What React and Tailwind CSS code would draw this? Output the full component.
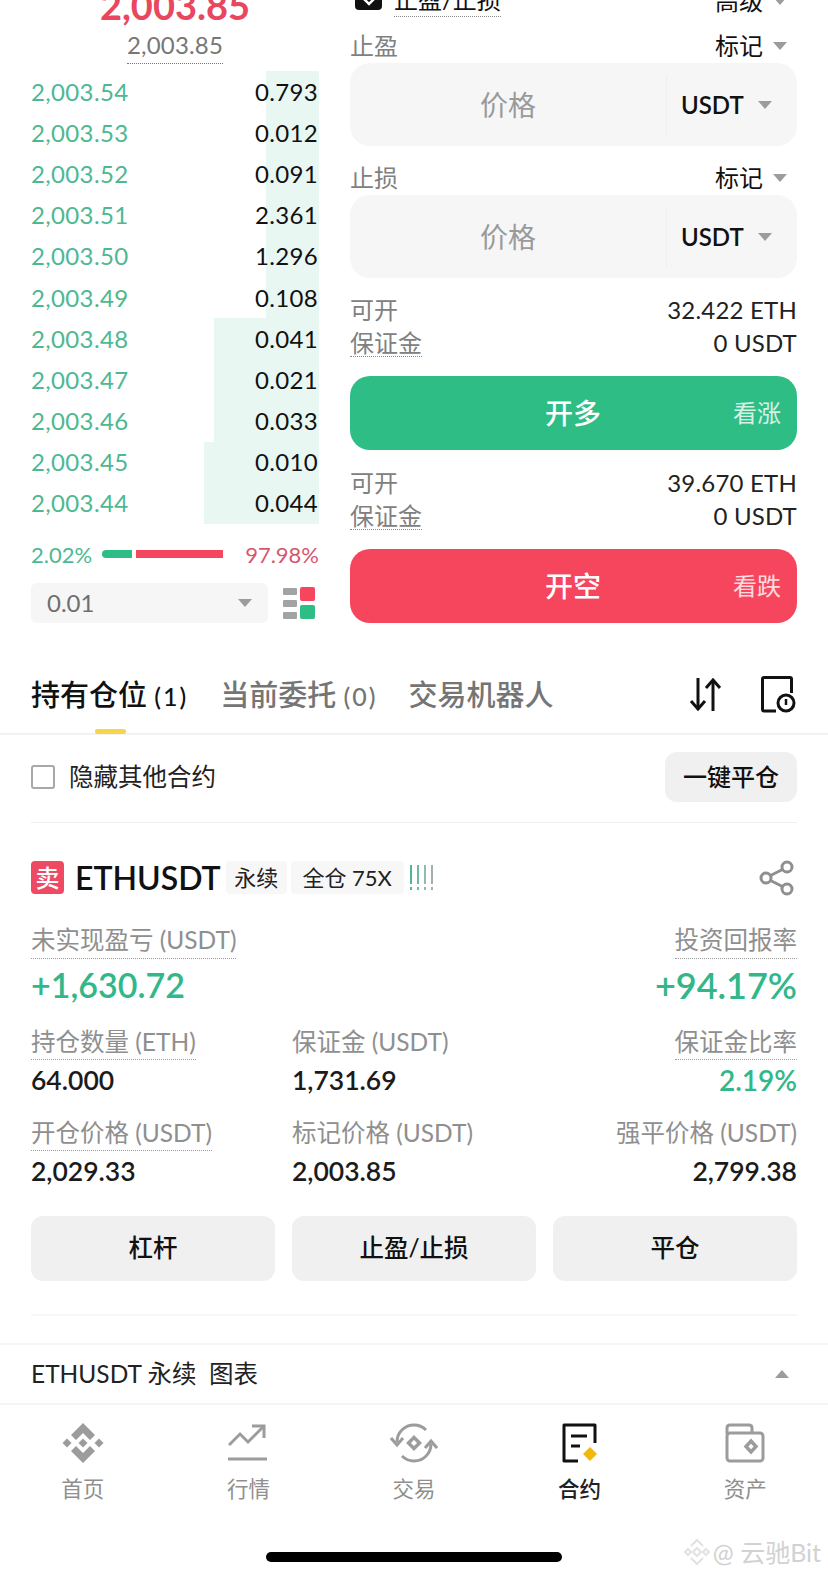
const rows = [
  ['2,003.54', '0.793', 'w-[53px]'],
  ['2,003.53', '0.012', 'w-[53px]'],
  ['2,003.52', '0.091', 'w-[53px]'],
  ['2,003.51', '2.361', 'w-[53px]'],
  ['2,003.50', '1.296', 'w-[53px]'],
  ['2,003.49', '0.108', 'w-[53px]'],
  ['2,003.48', '0.041', 'w-[105px]'],
  ['2,003.47', '0.021', 'w-[105px]'],
  ['2,003.46', '0.033', 'w-[105px]'],
  ['2,003.45', '0.010', 'w-[115px]'],
  ['2,003.44', '0.044', 'w-[115px]'],
];

function Caret({ className = '' }) {
  return <span className={`inline-block h-0 w-0 border-x-[7px] border-t-[8px] border-x-transparent border-t-[#9c9c9c] ${className}`} />;
}

function PriceInput() {
  return (
    <div className="flex h-[83px] items-center rounded-[20px] bg-[#f6f6f6]">
      <div className="w-[316px] text-center text-[28px] text-[#9a9a9a]">价格</div>
      <div className="flex h-[60px] flex-1 items-center border-l border-[#efefef] pl-[14px]">
        <span className="text-[24px] font-semibold text-[#111]">USDT</span>
        <Caret className="ml-[14px]" />
      </div>
    </div>
  );
}

function OpenInfo({ amount }) {
  return (
    <div className="text-[24px] leading-[33px]">
      <div className="flex justify-between">
        <span className="text-[#808080]">可开</span>
        <span className="tracking-[0.2px] text-[#222]">{amount}</span>
      </div>
      <div className="flex justify-between">
        <span className="h-[31px] border-b border-dotted border-[#8a8a8a] text-[#808080]">保证金</span>
        <span className="tracking-[0.2px] text-[#222]">0 USDT</span>
      </div>
    </div>
  );
}

function TradeButton({ label, hint, color }) {
  return (
    <div className={`relative flex h-[74px] items-center justify-center rounded-[20px] text-white ${color}`}>
      <span className="pr-[1px] text-[28px] font-medium">{label}</span>
      <span className="absolute right-[16px] text-[24px] text-white/80">{hint}</span>
    </div>
  );
}

function Stat({ label, value, right = false, dotted = true, valueClass = '' }) {
  return (
    <div className={`flex flex-col ${right ? 'items-end' : 'items-start'}`}>
      <span className={`h-[34px] text-[24.5px] leading-[32px] text-[#8f8f8f] ${dotted ? 'border-b border-dotted border-[#9a9a9a]' : ''}`}>{label}</span>
      <span className={`mt-[3px] leading-[34px] font-semibold ${valueClass || 'text-[26.5px] text-[#1b1b1b]'}`}>{value}</span>
    </div>
  );
}

function BinanceIcon() {
  return (
    <svg width="42" height="42" viewBox="0 0 42 42" fill="#9c9c9c">
      <path d="M21 1 L33 13 L28 18 L21 11 L14 18 L9 13 Z" />
      <path d="M21 41 L33 29 L28 24 L21 31 L14 24 L9 29 Z" />
      <path d="M21 16.5 L25.5 21 L21 25.5 L16.5 21 Z" />
      <path d="M5 16.5 L9.5 21 L5 25.5 L0.5 21 Z" />
      <path d="M37 16.5 L41.5 21 L37 25.5 L32.5 21 Z" />
    </svg>
  );
}

function TrendIcon() {
  return (
    <svg width="40" height="38" viewBox="0 0 40 38" fill="none" stroke="#9c9c9c" strokeWidth="3">
      <path d="M1 21 L12 10 L20 18 L35 3" />
      <path d="M24 2 H36 V14" />
      <path d="M0 35 H39" />
    </svg>
  );
}

function SwapIcon() {
  return (
    <svg width="48" height="40" viewBox="0 0 48 40" fill="none" stroke="#9c9c9c" strokeWidth="3">
      <path d="M7 19 C7 9 15 2 24 2 C29 2 33 4 36 7" />
      <path d="M41 21 C41 31 33 38 24 38 C19 38 15 36 12 33" />
      <path d="M1 15 L7 22 L13 15" />
      <path d="M35 25 L41 18 L47 25" />
      <path d="M24 14.5 L29.5 20 L24 25.5 L18.5 20 Z" strokeWidth="3.5" />
    </svg>
  );
}

function ContractIcon() {
  return (
    <svg width="36" height="40" viewBox="0 0 36 40" fill="none">
      <path d="M16 38 H2 V2 H33 V20" stroke="#111" strokeWidth="3" strokeLinejoin="round" />
      <path d="M9 13 H25" stroke="#111" strokeWidth="3" />
      <path d="M9 23 H18" stroke="#111" strokeWidth="3" />
      <path d="M28 24 L35 31 L28 38 L21 31 Z" fill="#f0b90b" />
    </svg>
  );
}

function WalletIcon() {
  return (
    <svg width="40" height="40" viewBox="0 0 40 40" fill="none" stroke="#9c9c9c" strokeWidth="3">
      <path d="M2 11 V5 Q2 2 5 2 H24 Q27 2 27 5 V10" />
      <rect x="2" y="10" width="36" height="28" rx="3" />
      <path d="M26 18 L31 23.5 L26 29 L21 23.5 Z" strokeWidth="3.5" />
    </svg>
  );
}

const tabs = [
  ['首页', <BinanceIcon key="a" />, false],
  ['行情', <TrendIcon key="b" />, false],
  ['交易', <SwapIcon key="c" />, false],
  ['合约', <ContractIcon key="d" />, true],
  ['资产', <WalletIcon key="e" />, false],
];

export default function App() {
  return (
    <div className="relative h-[1575px] w-[828px] overflow-hidden bg-white [font-family:Lato,'Noto_Sans_CJK_SC',sans-serif]">
      <div className="flex h-[640px] px-[31px]">
        {/* order book */}
        <div className="w-[288px]">
          <div className="-mt-[17px] flex h-[88px] flex-col items-center">
            <div className="h-[44px] text-[38px] leading-[44px] font-bold text-[#e8475f]">2,003.85</div>
            <div className="h-[37px] border-b border-dotted border-[#777] text-[24px] leading-[36px] tracking-[0.2px] text-[#777]">2,003.85</div>
          </div>
          <div className="h-[453px]">
            {rows.map(([price, qty, bar]) => (
              <div key={price} className="relative flex h-[41.2px] items-center justify-between text-[24px] tracking-[0.35px]">
                <div className={`absolute top-0 right-0 bottom-0 bg-[#e9f7f3] ${bar}`} />
                <span className="relative text-[#4db892]">{price}</span>
                <span className="relative pr-[1px] text-[#111]">{qty}</span>
              </div>
            ))}
          </div>
          <div className="mt-[14px] flex h-[32px] items-center text-[22px]">
            <span className="w-[71px] text-[#4db892]">2.02%</span>
            <span className="h-[8px] w-[30px] rounded-l-full bg-[#2ebd85]" />
            <span className="ml-[4px] h-[8px] w-[87px] bg-[#f6465d]" />
            <span className="ml-auto text-[#d8566e]">97.98%</span>
          </div>
          <div className="mt-[13px] flex items-center justify-between">
            <div className="flex h-[40px] w-[237px] items-center justify-between rounded-[6px] bg-[#f6f6f6] pr-[16px] pl-[16px] text-[24px] text-[#6f6f6f]">
              0.01
              <Caret />
            </div>
            <svg width="32" height="32" viewBox="0 0 32 32" className="mr-[4px]">
              <rect x="0" y="1" width="14" height="7" rx="1" fill="#a3a3a3" />
              <rect x="0" y="13" width="14" height="7" rx="1" fill="#a3a3a3" />
              <rect x="0" y="25" width="14" height="7" rx="1" fill="#a3a3a3" />
              <rect x="17" y="0" width="15" height="14" rx="2" fill="#f6465d" />
              <rect x="17" y="18" width="15" height="14" rx="2" fill="#2ebd85" />
            </svg>
          </div>
        </div>

        {/* order form */}
        <div className="ml-[31px] w-[447px]">
          <div className="-mt-[16px] flex h-[33px] items-center justify-between">
            <div className="flex items-center">
              <span className="mb-[8px] ml-[5px] flex h-[26px] w-[27px] items-end justify-center rounded-[4px] bg-[#111] pb-[4px]">
                <svg width="14" height="10" viewBox="0 0 14 10" fill="none" stroke="#fff" strokeWidth="2.5">
                  <path d="M2 3 L7 8 L12 3" />
                </svg>
              </span>
              <span className="ml-[12px] h-[33px] border-b border-dotted border-[#888] text-[24px] leading-[32px] text-[#111]">止盈/止损</span>
            </div>
            <div className="flex items-center pr-[10px] text-[24px] text-[#111]">
              高级
              <Caret className="ml-[10px]" />
            </div>
          </div>
          <div className="mt-[14px] mb-[2px] flex h-[30px] items-center justify-between text-[24px]">
            <span className="text-[#808080]">止盈</span>
            <span className="flex items-center pr-[10px] text-[#111]">标记<Caret className="ml-[10px]" /></span>
          </div>
          <PriceInput />
          <div className="mt-[17px] mb-[2px] flex h-[30px] items-center justify-between text-[24px]">
            <span className="text-[#808080]">止损</span>
            <span className="flex items-center pr-[10px] text-[#111]">标记<Caret className="ml-[10px]" /></span>
          </div>
          <PriceInput />
          <div className="mt-[15px]">
            <OpenInfo amount="32.422 ETH" />
          </div>
          <div className="mt-[17px]">
            <TradeButton label="开多" hint="看涨" color="bg-[#2ebd85]" />
          </div>
          <div className="mt-[16px]">
            <OpenInfo amount="39.670 ETH" />
          </div>
          <div className="mt-[17px]">
            <TradeButton label="开空" hint="看跌" color="bg-[#f6465d]" />
          </div>
        </div>
      </div>

      {/* position tabs */}
      <div className="relative flex h-[95px] items-center border-b-2 border-[#f2f2f2] px-[31px] pt-[16px]">
        <span className="text-[29px] font-medium text-[#111]">持有仓位 <span className="text-[25px] tracking-[2px]">(1)</span></span>
        <span className="ml-[32px] text-[29px] font-medium text-[#757575]">当前委托 <span className="text-[25px] tracking-[2px]">(0)</span></span>
        <span className="ml-[31px] text-[29px] font-medium text-[#757575]">交易机器人</span>
        <svg width="32" height="33" viewBox="0 0 32 33" fill="none" stroke="#111" strokeWidth="3" className="mr-[3px] ml-auto">
          <path d="M9 0 V30" />
          <path d="M2 23 L9 31 L16 23" />
          <path d="M24 33 V3" />
          <path d="M17 10 L24 2 L31 10" />
        </svg>
        <svg width="36" height="37" viewBox="0 0 36 37" fill="none" stroke="#111" strokeWidth="3" className="ml-[37px]">
          <path d="M15 35 H3 Q1.5 35 1.5 33 V3 Q1.5 1.5 3 1.5 H29 Q30.5 1.5 30.5 3 V17" />
          <circle cx="25" cy="27" r="8" />
          <path d="M25 23 V29" strokeWidth="2.5" />
        </svg>
        <div className="absolute bottom-[-1px] left-[95px] h-[5px] w-[31px] rounded-[2px] bg-[#f8d548]" />
      </div>

      <div className="mx-[31px] flex h-[88px] items-center justify-between border-b border-[#efefef] pb-[3px]">
        <div className="flex items-center text-[24.5px] text-[#222]">
          <span className="mr-[14px] h-[24px] w-[24px] rounded-[3px] border-2 border-[#a8a8a8]" />
          隐藏其他合约
        </div>
        <div className="flex h-[50px] w-[132px] items-center justify-center rounded-[12px] bg-[#f0f0f0] text-[24px] font-medium text-[#111]">一键平仓</div>
      </div>

      {/* position card */}
      <div className="px-[31px]">
        <div className="mt-[37px] flex h-[35px] items-center">
          <span className="flex h-[33px] w-[33px] items-center justify-center rounded-[4px] bg-[#ee4a63] text-[24px] leading-none font-medium text-white">卖</span>
          <span className="ml-[11px] text-[32px] font-semibold text-[#111]">ETHUSDT</span>
          <span className="ml-[5px] flex h-[33px] w-[61px] items-center justify-center rounded-[4px] bg-[#f7f7f7] text-[22px] text-[#222]">永续</span>
          <span className="ml-[4px] flex h-[33px] w-[113px] items-center justify-center rounded-[4px] bg-[#f7f7f7] text-[22px] text-[#222]">全仓 75X</span>
          <svg width="27" height="26" viewBox="0 0 27 26" className="ml-[5px]">
            <path d="M2 0 V19 M2 22 V25" stroke="#4db892" strokeWidth="2" />
            <path d="M9 0 V19 M9 22 V25" stroke="#6dbb9f" strokeWidth="2" />
            <path d="M16 0 V19 M16 22 V25" stroke="#8fbcab" strokeWidth="2" />
            <path d="M23 0 V19 M23 22 V25" stroke="#a6aeaa" strokeWidth="2" />
          </svg>
          <svg width="36" height="36" viewBox="0 0 36 36" fill="none" stroke="#8f8f8f" strokeWidth="3" className="mr-[2px] ml-auto">
            <circle cx="7" cy="18" r="5" />
            <circle cx="28" cy="7" r="5" />
            <circle cx="28" cy="29" r="5" />
            <path d="M11.5 15.5 L23.5 9.5 M11.5 20.5 L23.5 26.5" />
          </svg>
        </div>

        <div className="mt-[29px] flex justify-between">
          <div className="flex flex-col items-start">
            <span className="h-[35px] border-b border-dotted border-[#9a9a9a] text-[24.5px] leading-[32px] text-[#8f8f8f]">未实现盈亏 (USDT)</span>
            <span className="mt-[6px] text-[34px] leading-[40px] font-semibold text-[#32b78a]">+1,630.72</span>
          </div>
          <div className="flex flex-col items-end">
            <span className="h-[35px] border-b border-dotted border-[#9a9a9a] text-[24.5px] leading-[32px] text-[#8f8f8f]">投资回报率</span>
            <span className="mt-[6px] text-[36px] leading-[40px] font-semibold text-[#32b78a]">+94.17%</span>
          </div>
        </div>

        <div className="mt-[21px] grid grid-cols-[261px_1fr_auto] gap-y-[20px]">
          <Stat label="持仓数量 (ETH)" value="64.000" />
          <Stat label="保证金 (USDT)" value="1,731.69" dotted={false} />
          <Stat label="保证金比率" value="2.19%" right valueClass="text-[28px] text-[#32b78a]" />
          <Stat label="开仓价格 (USDT)" value="2,029.33" />
          <Stat label="标记价格 (USDT)" value="2,003.85" dotted={false} />
          <Stat label="强平价格 (USDT)" value="2,799.38" right dotted={false} />
        </div>

        <div className="mt-[28px] grid grid-cols-3 gap-[17px]">
          {['杠杆', '止盈/止损', '平仓'].map((label) => (
            <div key={label} className="flex h-[65px] items-center justify-center rounded-[12px] bg-[#f0f0f0] text-[24.5px] font-medium text-[#111]">{label}</div>
          ))}
        </div>

        <div className="mt-[33px] border-t-2 border-[#f7f7f7]" />
      </div>

      <div className="mt-[27px] flex h-[62px] items-center justify-between border-y-2 border-[#f5f5f5] px-[31px] text-[24.5px] text-[#222]">
        <span>ETHUSDT 永续&nbsp;&nbsp;图表</span>
        <Caret className="mr-[8px] rotate-180" />
      </div>

      {/* bottom nav */}
      <div className="grid h-[112px] grid-cols-5 pt-[17px]">
        {tabs.map(([label, icon, active]) => (
          <div key={label} className="flex flex-col items-center">
            <div className="flex h-[42px] items-center">{icon}</div>
            <span className={`mt-[11px] text-[21.5px] leading-[28px] ${active ? 'font-medium text-[#222]' : 'text-[#8f8f8f]'}`}>{label}</span>
          </div>
        ))}
      </div>

      <div className="mx-auto mt-[35px] h-[10px] w-[296px] rounded-full bg-black" />

      {/* watermark */}
      <div className="absolute right-[7px] bottom-[9px] flex items-center text-[25px] leading-none text-[#d2d2d2]">
        <svg width="28" height="28" viewBox="0 0 28 28" fill="none" stroke="#e2e2e2" strokeWidth="2" className="mr-[2px]">
          <path d="M8 8 L14 2 L20 8" />
          <path d="M8 20 L14 26 L20 20" />
          <path d="M2 14 L5 11 L8 14 L5 17 Z" />
          <path d="M20 14 L23 11 L26 14 L23 17 Z" />
          <path d="M14 10 L18 14 L14 18 L10 14 Z" />
        </svg>
        @ 云驰Bit
      </div>
    </div>
  );
}
